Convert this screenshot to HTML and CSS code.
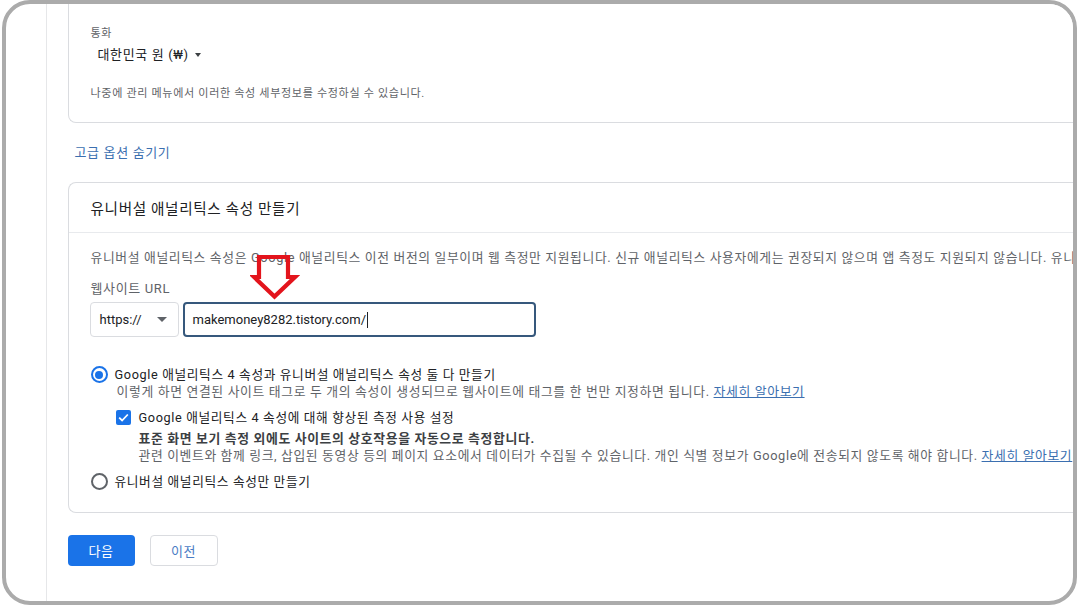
FILE: index.html
```html
<!DOCTYPE html>
<html lang="ko">
<head>
<meta charset="utf-8">
<link rel="stylesheet" href="styles.css">
</head>
<body>
<div class="frame">
  <div class="column">
    <section class="card card-top">
      <div class="field-label">통화</div>
      <div class="currency">대한민국 원 (₩) <span class="mini-caret"></span></div>
      <p class="note">나중에 관리 메뉴에서 이러한 속성 세부정보를 수정하실 수 있습니다.</p>
    </section>

    <a class="adv-link">고급 옵션 숨기기</a>

    <section class="card card-ua">
      <header class="card-head">유니버설 애널리틱스 속성 만들기</header>
      <div class="card-body">
        <p class="intro">유니버설 애널리틱스 속성은 Google 애널리틱스 이전 버전의 일부이며 웹 측정만 지원됩니다. 신규 애널리틱스 사용자에게는 권장되지 않으며 앱 측정도 지원되지 않습니다. 유니버설</p>
        <div class="url-label">웹사이트 URL</div>
        <div class="url-row">
          <div class="select">https://<span class="caret"></span></div>
          <div class="input">makemoney8282.tistory.com/<span class="cursor"></span></div>
        </div>

        <div class="option option-first">
          <span class="radio radio-on"></span>
          <div class="option-text">
            <div class="opt-label">Google 애널리틱스 4 속성과 유니버설 애널리틱스 속성 둘 다 만들기</div>
            <div class="opt-sub sub-shift">이렇게 하면 연결된 사이트 태그로 두 개의 속성이 생성되므로 웹사이트에 태그를 한 번만 지정하면 됩니다. <a class="learn">자세히 알아보기</a></div>
            <div class="check-row">
              <span class="checkbox"><svg viewBox="0 0 16 16" width="15" height="15"><path d="M3.4 8.2 L6.5 11.2 L12.6 4.8" fill="none" stroke="#fff" stroke-width="1.9"/></svg></span>
              <div class="check-text">
                <div class="opt-label">Google 애널리틱스 4 속성에 대해 향상된 측정 사용 설정</div>
                <div class="opt-strong">표준 화면 보기 측정 외에도 사이트의 상호작용을 자동으로 측정합니다.</div>
                <div class="opt-sub opt-sub-long">관련 이벤트와 함께 링크, 삽입된 동영상 등의 페이지 요소에서 데이터가 수집될 수 있습니다. 개인 식별 정보가 Google에 전송되지 않도록 해야 합니다. <a class="learn">자세히 알아보기</a></div>
              </div>
            </div>
          </div>
        </div>

        <div class="option option-second">
          <span class="radio"></span>
          <div class="option-text">
            <div class="opt-label">유니버설 애널리틱스 속성만 만들기</div>
          </div>
        </div>
      </div>
    </section>

    <div class="actions">
      <button class="btn btn-primary">다음</button>
      <button class="btn btn-secondary">이전</button>
    </div>
  </div>

  <svg class="red-arrow" width="52" height="52" viewBox="0 0 52 52">
    <path d="M9 4 H38 V24 H45 L24.5 43.5 L4 24 H9 Z" fill="none" stroke="#e3141c" stroke-width="4.2" stroke-linejoin="miter"/>
  </svg>
</div>
</body>
</html>
```

FILE: styles.css
```css
* { box-sizing: border-box; }
html, body { margin: 0; padding: 0; background: #ffffff; }
body {
  font-family: Roboto, "Noto Sans CJK KR", sans-serif;
  color: #202124;
  letter-spacing: 0.04em;
  width: 1080px;
  height: 607px;
  overflow: hidden;
}
.frame {
  position: relative;
  margin-left: 2px;
  width: 1075px;
  height: 605px;
  border: 4.5px solid #ababab;
  border-radius: 28px;
  overflow: hidden;
  background: #fff;
}
.column {
  margin-left: 39.5px;
  width: 1100px;
  height: 100%;
  border-left: 1px solid #e6e7e9;
  padding-left: 21px;
}
.card {
  border: 1px solid #dadce0;
  border-right: none;
  background: #fff;
}
.card-top {
  border-top: none;
  border-bottom-left-radius: 8px;
  padding: 23px 0 20px 22px;
}
.field-label {
  font-size: 11px;
  line-height: 14px;
  color: #5f6368;
}
.currency {
  margin-top: 5px;
  margin-left: 7px;
  font-size: 13px;
  line-height: 18px;
  color: #202124;
  display: flex;
  align-items: center;
  gap: 6px;
}
.mini-caret {
  width: 0; height: 0;
  border-left: 3.5px solid transparent;
  border-right: 3.5px solid transparent;
  border-top: 4px solid #3c4043;
}
.note {
  margin: 22px 0 0;
  font-size: 11.1px;
  line-height: 16px;
  color: #5f6368;
}
.adv-link {
  display: block;
  margin: 21px 0 0 7px;
  font-size: 13px;
  line-height: 18px;
  color: #3b6fb0;
}
.card-ua {
  margin-top: 20px;
  border-radius: 8px 0 0 8px;
}
.card-head {
  height: 50px;
  display: flex;
  align-items: center;
  padding-left: 22px;
  font-size: 14.6px;
  color: #202124;
  border-bottom: 1px solid #e8eaed;
}
.card-body {
  padding: 16px 0 22px 22px;
}
.intro {
  margin: 0;
  font-size: 12.8px;
  line-height: 18px;
  color: #5f6368;
  white-space: nowrap;
}
.url-label {
  margin-top: 13px;
  font-size: 13px;
  line-height: 18px;
  color: #5f6368;
}
.url-row {
  margin-top: 4px;
  display: flex;
  gap: 4px;
  margin-left: -1px;
  letter-spacing: 0;
}
.select {
  width: 89px;
  height: 35px;
  border: 1px solid #dadce0;
  border-radius: 4px;
  display: flex;
  align-items: center;
  justify-content: space-between;
  padding: 0 11px 0 9px;
  font-size: 13px;
  color: #202124;
}
.caret {
  width: 0; height: 0;
  border-left: 5px solid transparent;
  border-right: 5px solid transparent;
  border-top: 5px solid #5f6368;
}
.input {
  width: 353px;
  height: 35px;
  border: 2px solid #36587c;
  border-radius: 4px;
  display: flex;
  align-items: center;
  padding-left: 8px;
  font-size: 13px;
  color: #202124;
}
.cursor {
  display: inline-block;
  width: 1px;
  height: 16px;
  background: #202124;
  margin-left: 1px;
}
.option {
  display: flex;
  align-items: flex-start;
  gap: 7px;
}
.option-first { margin-top: 29px; }
.option-second { margin-top: 9px; }
.radio {
  flex: none;
  width: 17px;
  height: 17px;
  border: 2px solid #5f6368;
  border-radius: 50%;
  position: relative;
}
.radio-on {
  border-color: #1a73e8;
}
.radio-on::after {
  content: "";
  position: absolute;
  left: 2.5px; top: 2.5px;
  width: 8px; height: 8px;
  border-radius: 50%;
  background: #1a73e8;
}
.opt-label {
  font-size: 12.7px;
  line-height: 17px;
  color: #202124;
}
.opt-sub {
  font-size: 12.85px;
  line-height: 17px;
  color: #5f6368;
  white-space: nowrap;
}
.opt-sub-long {
  font-size: 12.8px;
}
.sub-shift { margin-left: 2px; }
.opt-strong {
  margin-top: 4px;
  font-size: 12.85px;
  line-height: 17px;
  font-weight: 700;
  color: #3c4043;
}
.learn {
  color: #3b6fb0;
  text-decoration: underline;
}
.check-row {
  margin-top: 9px;
  margin-left: 1px;
  display: flex;
  align-items: flex-start;
  gap: 8px;
}
.checkbox {
  flex: none;
  width: 15px;
  height: 15px;
  margin-top: 1px;
  background: #1a73e8;
  border-radius: 2px;
  display: flex;
}
.actions {
  margin-top: 22px;
  display: flex;
  gap: 15px;
}
.btn {
  height: 31px;
  border-radius: 4px;
  font-family: Roboto, "Noto Sans CJK KR", sans-serif;
  font-size: 13px;
  letter-spacing: 0.04em;
  padding: 0;
  cursor: pointer;
}
.btn-primary {
  width: 67px;
  background: #1a73e8;
  color: #fff;
  border: none;
}
.btn-secondary {
  width: 68px;
  background: #fff;
  color: #4a7cc4;
  border: 1px solid #dadce0;
}
.red-arrow {
  position: absolute;
  left: 243.5px;
  top: 248.5px;
}
```
